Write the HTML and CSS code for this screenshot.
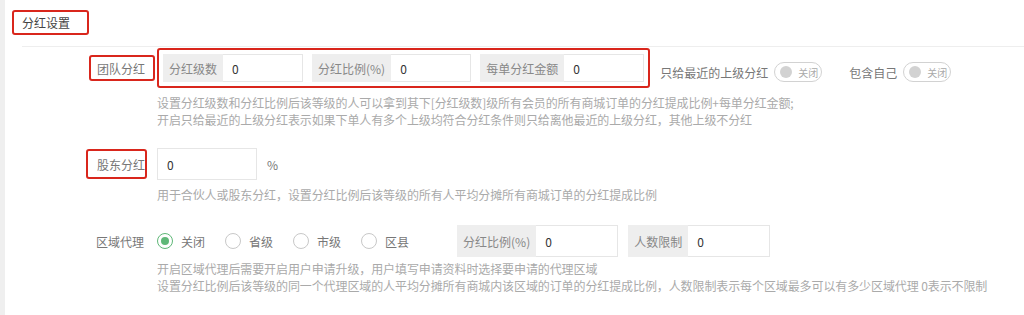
FILE: index.html
```html
<!DOCTYPE html>
<html lang="zh-CN">
<head>
    <meta charset="UTF-8">
    <meta name="viewport" content="width=device-width, initial-scale=1.0">
    <title>分红设置</title>
    <link rel="stylesheet" href="styles.css">
</head>
<body>
    <div class="page">
        <div class="side-strip"></div>

        <div class="main">
            <div class="section-title mark">分红设置</div>
            <div class="divider"></div>

            <!-- 团队分红 -->
            <div class="form-item row-team">
                <div class="form-label">
                    <span class="mark label-team">团队分红</span>
                </div>
                <div class="mark group-wrap">
                    <div class="input-group">
                        <span class="addon">分红级数</span>
                        <input type="text" class="input" value="0">
                    </div>
                    <div class="input-group">
                        <span class="addon">分红比例(%)</span>
                        <input type="text" class="input" value="0">
                    </div>
                    <div class="input-group">
                        <span class="addon">每单分红金额</span>
                        <input type="text" class="input" value="0">
                    </div>
                </div>
                <div class="switch-item first">
                    <span class="switch-text">只给最近的上级分红</span>
                    <span class="switch"><i class="knob"></i><em>关闭</em></span>
                </div>
                <div class="switch-item">
                    <span class="switch-text">包含自己</span>
                    <span class="switch"><i class="knob"></i><em>关闭</em></span>
                </div>
            </div>
            <div class="help help-team">
                设置分红级数和分红比例后该等级的人可以拿到其下[分红级数]级所有会员的所有商城订单的分红提成比例+每单分红金额;<br>
                开启只给最近的上级分红表示如果下单人有多个上级均符合分红条件则只给离他最近的上级分红，其他上级不分红
            </div>

            <!-- 股东分红 -->
            <div class="form-item row-holder">
                <div class="form-label">
                    <span class="mark label-holder">股东分红</span>
                </div>
                <input type="text" class="input input-wide" value="0">
                <span class="unit">%</span>
            </div>
            <div class="help help-holder">
                用于合伙人或股东分红，设置分红比例后该等级的所有人平均分摊所有商城订单的分红提成比例
            </div>

            <!-- 区域代理 -->
            <div class="form-item row-area">
                <div class="form-label">
                    <span class="label-plain">区域代理</span>
                </div>
                <label class="radio checked"><i class="radio-icon"></i>关闭</label>
                <label class="radio"><i class="radio-icon"></i>省级</label>
                <label class="radio"><i class="radio-icon"></i>市级</label>
                <label class="radio"><i class="radio-icon"></i>区县</label>
                <div class="area-groups">
                    <div class="input-group tall">
                        <span class="addon">分红比例(%)</span>
                        <input type="text" class="input" value="0">
                    </div>
                    <div class="input-group tall">
                        <span class="addon">人数限制</span>
                        <input type="text" class="input" value="0">
                    </div>
                </div>
            </div>
            <div class="help help-area">
                开启区域代理后需要开启用户申请升级，用户填写申请资料时选择要申请的代理区域<br>
                设置分红比例后该等级的同一个代理区域的人平均分摊所有商城内该区域的订单的分红提成比例，人数限制表示每个区域最多可以有多少区域代理 0表示不限制
            </div>
        </div>
    </div>
</body>
</html>
```

FILE: styles.css
```css
body {
    margin: 0;
    font-family: "Noto Sans CJK SC", "Microsoft YaHei", sans-serif;
    font-size: 12px;
    color: #777;
    background-color: #fff;
    overflow: hidden;
}

.page {
    display: flex;
    height: 315px;
}

.side-strip {
    width: 5px;
    background-color: #efefef;
    flex-shrink: 0;
}

.main {
    flex: 1;
}

/* red annotation boxes */
.mark {
    border: 2px solid #d9261c;
    border-radius: 3px;
    box-sizing: border-box;
}

.section-title {
    display: inline-flex;
    align-items: center;
    height: 25px;
    margin: 10px 0 0 7px;
    padding: 0 17px 0 8px;
    color: #444;
}

.divider {
    height: 1px;
    margin: 11px 0 0 17px;
    background-color: #eee;
}

.form-item {
    display: flex;
    align-items: center;
}

.form-label {
    width: 152px;
    flex-shrink: 0;
    display: flex;
    justify-content: flex-end;
}

.label-team {
    display: flex;
    align-items: center;
    height: 26px;
    padding: 0 8px 0 6px;
    margin-right: 2px;
}

.label-holder {
    display: flex;
    align-items: center;
    height: 30px;
    padding: 0 0 0 9px;
    margin-right: 10px;
}

.label-plain {
    padding-right: 13px;
}

.row-team {
    margin-top: 1px;
}

.group-wrap {
    display: flex;
    gap: 9px;
    padding: 4px;
}

.input-group {
    display: flex;
    height: 28px;
}

.input-group.tall {
    height: 32px;
}

.addon {
    display: flex;
    align-items: center;
    padding: 0 6px;
    background-color: #eee;
    color: #888;
    white-space: nowrap;
}

.input {
    width: 80px;
    height: 100%;
    box-sizing: border-box;
    border: 1px solid #e6e6e6;
    border-left: none;
    padding: 0 9px;
    font-family: inherit;
    font-size: 12px;
    color: #333;
    background: #fff;
    outline: none;
}

.input-group.tall .input {
    width: 82px;
}

.switch-item {
    display: flex;
    align-items: center;
    margin-top: 8px;
    margin-left: 27px;
}

.switch-item.first {
    margin-left: 10px;
}

.switch-text {
    margin-right: 6px;
}

.switch {
    position: relative;
    display: inline-flex;
    align-items: center;
    width: 48px;
    height: 20px;
    box-sizing: border-box;
    border: 1px solid #d2d2d2;
    border-radius: 20px;
}

.knob {
    width: 12px;
    height: 12px;
    margin-left: 5px;
    border-radius: 50%;
    background-color: #d2d2d2;
}

.switch em {
    font-style: normal;
    font-size: 10px;
    color: #aaa;
    margin-left: 6px;
}

.help {
    padding-left: 152px;
    line-height: 17px;
    color: #aaa;
    white-space: nowrap;
    letter-spacing: -0.1px;
}

.help-team {
    margin-top: 6px;
}

.row-holder {
    margin-top: 20px;
}

.input-wide {
    width: 100px;
    height: 32px;
    border-left: 1px solid #e6e6e6;
}

.unit {
    margin-left: 10px;
}

.help-holder {
    margin-top: 6px;
}

.row-area {
    margin-top: 22px;
}

.radio {
    display: flex;
    align-items: center;
    margin-right: 20px;
}

.radio-icon {
    position: relative;
    width: 16px;
    height: 16px;
    box-sizing: border-box;
    margin-right: 8px;
    border: 1px solid #c8c8c8;
    border-radius: 50%;
}

.radio.checked .radio-icon {
    border-color: #5fb878;
}

.radio.checked .radio-icon::after {
    content: "";
    position: absolute;
    left: 3px;
    top: 3px;
    width: 8px;
    height: 8px;
    border-radius: 50%;
    background-color: #5fb878;
}

.area-groups {
    display: flex;
    gap: 10px;
    margin-left: 28px;
}

.help-area {
    margin-top: 3px;
}
```
